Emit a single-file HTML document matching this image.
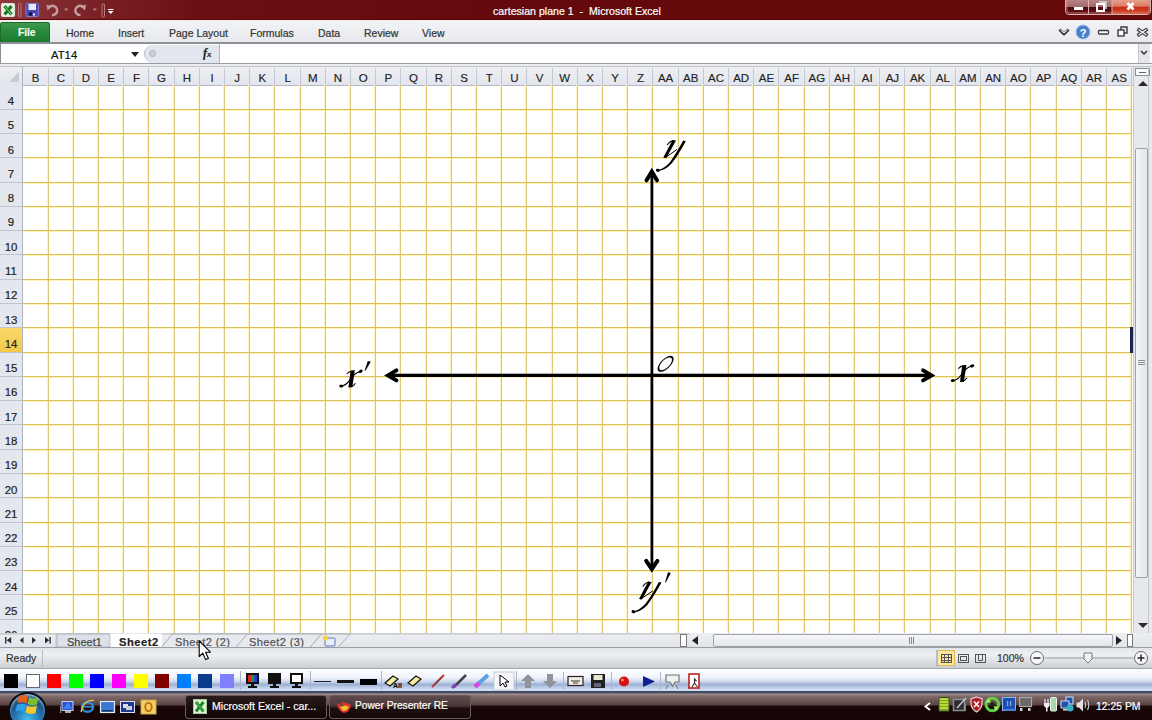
<!DOCTYPE html><html><head><meta charset="utf-8"><style>
*{margin:0;padding:0;box-sizing:border-box}
html,body{width:1152px;height:720px;overflow:hidden;background:#fff;font-family:"Liberation Sans",sans-serif}
.a{position:absolute}
.t{position:absolute;white-space:nowrap;line-height:1;-webkit-text-stroke:0.2px currentColor}
</style></head><body>
<div class="a" style="left:0;top:0;width:1152px;height:21px;background:linear-gradient(90deg,#8e3a3e 0px,#7a2226 90px,#6c0f12 200px,#650a0c 500px,#640808 1152px)"></div>
<div class="a" style="left:0;top:19px;width:1152px;height:2px;background:#5a0506"></div>
<div class="t" style="left:493px;top:6px;font-size:10.6px;color:#fff">cartesian plane 1&nbsp; -&nbsp; Microsoft Excel</div>
<svg class="a" style="left:0;top:2px" width="42" height="17"><rect x="1.5" y="1.5" width="13" height="13" rx="1.5" fill="#eef6e8" stroke="#d8e4d0" stroke-width="1.2"/><path d="M4.5 4 L11.5 12.5 M11.5 4 L4.5 12.5" stroke="#1a7a2a" stroke-width="3.2"/><path d="M5 4.5 L11 12" stroke="#8ad870" stroke-width="1"/><rect x="18.5" y="1.5" width="2.5" height="13" rx="1" fill="none" stroke="#c07878" stroke-width="1"/><rect x="26" y="1.5" width="12.5" height="13" rx="1" fill="#4a46b0"/><rect x="26" y="1.5" width="12.5" height="13" rx="1" fill="none" stroke="#8a86e0" stroke-width="0.8"/><rect x="28.5" y="2" width="7.5" height="6" fill="#e4e8f8"/><rect x="29" y="10.5" width="3" height="3" fill="#101030"/><rect x="33" y="11.5" width="2" height="2" fill="#f0f0f0"/></svg>
<svg class="a" style="left:40px;top:0px" width="80" height="20"><g fill="none" stroke="#c49ea0" stroke-width="2.4"><path d="M9.5 7 A4.6 4.6 0 1 1 12 15"/><path d="M43 7 A4.6 4.6 0 1 0 40.5 15"/></g><g fill="#c49ea0"><path d="M6.5 4.5 L12 6.5 L7.5 10.5z"/><path d="M46 4.5 L40.5 6.5 L45 10.5z"/></g><g fill="#b08486"><path d="M24 8.5 h4.5 l-2.25 2.5z"/><path d="M52.5 8.5 h4.5 l-2.25 2.5z"/></g><rect x="62" y="4" width="2.5" height="13" rx="1" fill="none" stroke="#b97a7a" stroke-width="1"/><g fill="#fff"><rect x="68" y="9" width="5.5" height="1"/><path d="M68 11 h5.5 l-2.75 3z"/></g></svg>
<svg class="a" style="left:1064px;top:0" width="88" height="17"><defs><linearGradient id="wbg" x1="0" y1="0" x2="0" y2="1"><stop offset="0" stop-color="#b88486"/><stop offset="0.45" stop-color="#a46a6c"/><stop offset="0.5" stop-color="#4e0a0c"/><stop offset="1" stop-color="#6a1416"/></linearGradient><linearGradient id="wbc" x1="0" y1="0" x2="0" y2="1"><stop offset="0" stop-color="#e8a088"/><stop offset="0.45" stop-color="#dc7a62"/><stop offset="0.5" stop-color="#c42a12"/><stop offset="1" stop-color="#d8502a"/></linearGradient></defs><path d="M1.5 0 V11 Q1.5 14.5 5 14.5 H83 Q86.5 14.5 86.5 11 V0" fill="url(#wbg)" stroke="#e0b0b0" stroke-width="1"/><path d="M48 0 V14 H83 Q86 14 86 11 V0z" fill="url(#wbc)"/><path d="M3 0 V10.5 Q3 13 5.5 13 H82.5 Q85 13 85 10.5 V0" fill="none" stroke="#c88a8a" stroke-width="0.8"/><rect x="24" y="0" width="1" height="14" fill="#e0b0b0"/><rect x="47.5" y="0" width="1" height="14" fill="#e0b0b0"/><rect x="10" y="7" width="9" height="3" fill="#fff"/><rect x="33" y="4" width="7" height="7" fill="none" stroke="#fff" stroke-width="2"/><path d="M35 2 H42 V9" fill="none" stroke="#ddd" stroke-width="1.5"/><path d="M63.5 3 L69.5 9.5 M69.5 3 L63.5 9.5" stroke="#fff" stroke-width="2.6"/></svg>
<div class="a" style="left:0;top:21px;width:1152px;height:22px;background:linear-gradient(#f2f3f6,#e6e8ec)"></div>
<div class="a" style="left:0;top:20px;width:1152px;height:1px;background:#f4ece6"></div>
<div class="a" style="left:0;top:22px;width:50px;height:21px;background:linear-gradient(#3e9a4a,#26883a 50%,#1c7a30);border-radius:2px 2px 0 0;border:1px solid #1a6a28"></div>
<div class="t" style="left:18px;top:28px;font-size:10.4px;font-weight:bold;letter-spacing:-0.1px;color:#eef8ea">File</div>
<div class="t" style="left:66px;top:28px;font-size:10.5px;color:#333">Home</div>
<div class="t" style="left:118px;top:28px;font-size:10.5px;color:#333">Insert</div>
<div class="t" style="left:169px;top:28px;font-size:10.5px;color:#333">Page Layout</div>
<div class="t" style="left:250px;top:28px;font-size:10.5px;color:#333">Formulas</div>
<div class="t" style="left:318px;top:28px;font-size:10.5px;color:#333">Data</div>
<div class="t" style="left:364px;top:28px;font-size:10.5px;color:#333">Review</div>
<div class="t" style="left:422px;top:28px;font-size:10.5px;color:#333">View</div>
<svg class="a" style="left:1056px;top:22px" width="96" height="20"><path d="M3.5 7.5 L8 12 L12.5 7.5" fill="none" stroke="#3a3a3a" stroke-width="3" stroke-linejoin="round"/><path d="M4.5 7.8 L8 11 L11.5 7.8" fill="none" stroke="#fff" stroke-width="1"/><circle cx="27" cy="10" r="7" fill="#4a80c8" stroke="#9cc0ea" stroke-width="1"/><text x="27" y="14.5" font-family="Liberation Sans" font-weight="bold" font-size="11" fill="#fff" text-anchor="middle">?</text><rect x="42.5" y="8.5" width="10" height="3.5" rx="1" fill="#fff" stroke="#3a3a3a" stroke-width="1.3"/><rect x="62" y="8" width="6" height="6" fill="#fff" stroke="#3a3a3a" stroke-width="1.4"/><path d="M65 8 V5 H71 V11 H68" fill="none" stroke="#3a3a3a" stroke-width="1.4"/><path d="M81.5 7 L91.5 13.5 M91.5 7 L81.5 13.5" stroke="#3a3a3a" stroke-width="3.4"/><path d="M82.5 7.6 L90.5 12.9 M90.5 7.6 L82.5 12.9" stroke="#fff" stroke-width="1.2"/></svg>
<div class="a" style="left:0;top:42px;width:1152px;height:2px;background:#8e9096"></div>
<div class="a" style="left:0;top:44px;width:1152px;height:20px;background:#fff"></div>
<div class="t" style="left:51px;top:50px;font-size:11.3px;color:#111">AT14</div>
<div class="a" style="left:0;top:44px;width:1px;height:24px;background:#8a8e96"></div>
<svg class="a" style="left:130px;top:50px" width="10" height="8"><path d="M1 2 h8 l-4 5z" fill="#222"/></svg>
<div class="a" style="left:144px;top:45px;width:76px;height:18px;background:#e2e6ee;border-radius:9px 0 0 9px;border-left:1px solid #b8bcc4"></div>
<div class="a" style="left:149px;top:50px;width:7px;height:7px;border-radius:50%;background:radial-gradient(#d8dce4,#a8acb4)"></div>
<div class="t" style="left:203px;top:47px;font-size:12px;font-style:italic;font-weight:bold;font-family:'Liberation Serif',serif;color:#222">f<span style="font-size:9px">x</span></div>
<div class="a" style="left:219px;top:44px;width:1px;height:19px;background:#b4b8c0"></div>
<div class="a" style="left:1138px;top:44px;width:12px;height:19px;background:#e4e6ea;border-left:1px solid #c4c6cc"></div>
<svg class="a" style="left:1139px;top:48px" width="10" height="10"><path d="M2 3 l3 3 l3 -3" fill="none" stroke="#333" stroke-width="1.5"/></svg>
<div class="a" style="left:0;top:63px;width:1152px;height:1px;background:#9a9ca2"></div>
<div class="a" style="left:0;top:64px;width:1152px;height:4px;background:#eceef2"></div>
<div class="a" style="left:0;top:66px;width:1152px;height:1px;background:#c0c2c8"></div>
<div class="a" style="left:0;top:67px;width:1133px;height:18px;background:linear-gradient(#eef0f4,#e2e5ec)"></div>
<div class="a" style="left:0;top:85px;width:1133px;height:1px;background:#b4b8c0"></div>
<svg class="a" style="left:8px;top:71px" width="12" height="12"><path d="M11 1 V11 H1z" fill="#c8ccd2"/></svg>
<div class="a" style="left:0;top:85px;width:23px;height:548px;background:#e4e7ee"></div>
<div class="a" style="left:22px;top:67px;width:1px;height:566px;background:#b0b4bc"></div>
<div class="t" style="left:23.0px;top:72.5px;width:25.2px;text-align:center;font-size:11.5px;color:#222;-webkit-text-stroke:0.15px #222">B</div>
<div class="a" style="left:48px;top:68px;width:1px;height:17px;background:#c4c8d0"></div>
<div class="t" style="left:48.2px;top:72.5px;width:25.2px;text-align:center;font-size:11.5px;color:#222;-webkit-text-stroke:0.15px #222">C</div>
<div class="a" style="left:73px;top:68px;width:1px;height:17px;background:#c4c8d0"></div>
<div class="t" style="left:73.4px;top:72.5px;width:25.2px;text-align:center;font-size:11.5px;color:#222;-webkit-text-stroke:0.15px #222">D</div>
<div class="a" style="left:98px;top:68px;width:1px;height:17px;background:#c4c8d0"></div>
<div class="t" style="left:98.6px;top:72.5px;width:25.2px;text-align:center;font-size:11.5px;color:#222;-webkit-text-stroke:0.15px #222">E</div>
<div class="a" style="left:123px;top:68px;width:1px;height:17px;background:#c4c8d0"></div>
<div class="t" style="left:123.8px;top:72.5px;width:25.2px;text-align:center;font-size:11.5px;color:#222;-webkit-text-stroke:0.15px #222">F</div>
<div class="a" style="left:148px;top:68px;width:1px;height:17px;background:#c4c8d0"></div>
<div class="t" style="left:149.0px;top:72.5px;width:25.2px;text-align:center;font-size:11.5px;color:#222;-webkit-text-stroke:0.15px #222">G</div>
<div class="a" style="left:174px;top:68px;width:1px;height:17px;background:#c4c8d0"></div>
<div class="t" style="left:174.2px;top:72.5px;width:25.2px;text-align:center;font-size:11.5px;color:#222;-webkit-text-stroke:0.15px #222">H</div>
<div class="a" style="left:199px;top:68px;width:1px;height:17px;background:#c4c8d0"></div>
<div class="t" style="left:199.4px;top:72.5px;width:25.2px;text-align:center;font-size:11.5px;color:#222;-webkit-text-stroke:0.15px #222">I</div>
<div class="a" style="left:224px;top:68px;width:1px;height:17px;background:#c4c8d0"></div>
<div class="t" style="left:224.6px;top:72.5px;width:25.2px;text-align:center;font-size:11.5px;color:#222;-webkit-text-stroke:0.15px #222">J</div>
<div class="a" style="left:249px;top:68px;width:1px;height:17px;background:#c4c8d0"></div>
<div class="t" style="left:249.8px;top:72.5px;width:25.2px;text-align:center;font-size:11.5px;color:#222;-webkit-text-stroke:0.15px #222">K</div>
<div class="a" style="left:274px;top:68px;width:1px;height:17px;background:#c4c8d0"></div>
<div class="t" style="left:275.0px;top:72.5px;width:25.2px;text-align:center;font-size:11.5px;color:#222;-webkit-text-stroke:0.15px #222">L</div>
<div class="a" style="left:300px;top:68px;width:1px;height:17px;background:#c4c8d0"></div>
<div class="t" style="left:300.2px;top:72.5px;width:25.2px;text-align:center;font-size:11.5px;color:#222;-webkit-text-stroke:0.15px #222">M</div>
<div class="a" style="left:325px;top:68px;width:1px;height:17px;background:#c4c8d0"></div>
<div class="t" style="left:325.4px;top:72.5px;width:25.2px;text-align:center;font-size:11.5px;color:#222;-webkit-text-stroke:0.15px #222">N</div>
<div class="a" style="left:350px;top:68px;width:1px;height:17px;background:#c4c8d0"></div>
<div class="t" style="left:350.6px;top:72.5px;width:25.2px;text-align:center;font-size:11.5px;color:#222;-webkit-text-stroke:0.15px #222">O</div>
<div class="a" style="left:375px;top:68px;width:1px;height:17px;background:#c4c8d0"></div>
<div class="t" style="left:375.8px;top:72.5px;width:25.2px;text-align:center;font-size:11.5px;color:#222;-webkit-text-stroke:0.15px #222">P</div>
<div class="a" style="left:400px;top:68px;width:1px;height:17px;background:#c4c8d0"></div>
<div class="t" style="left:401.0px;top:72.5px;width:25.2px;text-align:center;font-size:11.5px;color:#222;-webkit-text-stroke:0.15px #222">Q</div>
<div class="a" style="left:426px;top:68px;width:1px;height:17px;background:#c4c8d0"></div>
<div class="t" style="left:426.2px;top:72.5px;width:25.2px;text-align:center;font-size:11.5px;color:#222;-webkit-text-stroke:0.15px #222">R</div>
<div class="a" style="left:451px;top:68px;width:1px;height:17px;background:#c4c8d0"></div>
<div class="t" style="left:451.4px;top:72.5px;width:25.2px;text-align:center;font-size:11.5px;color:#222;-webkit-text-stroke:0.15px #222">S</div>
<div class="a" style="left:476px;top:68px;width:1px;height:17px;background:#c4c8d0"></div>
<div class="t" style="left:476.6px;top:72.5px;width:25.2px;text-align:center;font-size:11.5px;color:#222;-webkit-text-stroke:0.15px #222">T</div>
<div class="a" style="left:501px;top:68px;width:1px;height:17px;background:#c4c8d0"></div>
<div class="t" style="left:501.8px;top:72.5px;width:25.2px;text-align:center;font-size:11.5px;color:#222;-webkit-text-stroke:0.15px #222">U</div>
<div class="a" style="left:526px;top:68px;width:1px;height:17px;background:#c4c8d0"></div>
<div class="t" style="left:527.0px;top:72.5px;width:25.2px;text-align:center;font-size:11.5px;color:#222;-webkit-text-stroke:0.15px #222">V</div>
<div class="a" style="left:552px;top:68px;width:1px;height:17px;background:#c4c8d0"></div>
<div class="t" style="left:552.2px;top:72.5px;width:25.2px;text-align:center;font-size:11.5px;color:#222;-webkit-text-stroke:0.15px #222">W</div>
<div class="a" style="left:577px;top:68px;width:1px;height:17px;background:#c4c8d0"></div>
<div class="t" style="left:577.4px;top:72.5px;width:25.2px;text-align:center;font-size:11.5px;color:#222;-webkit-text-stroke:0.15px #222">X</div>
<div class="a" style="left:602px;top:68px;width:1px;height:17px;background:#c4c8d0"></div>
<div class="t" style="left:602.6px;top:72.5px;width:25.2px;text-align:center;font-size:11.5px;color:#222;-webkit-text-stroke:0.15px #222">Y</div>
<div class="a" style="left:627px;top:68px;width:1px;height:17px;background:#c4c8d0"></div>
<div class="t" style="left:627.8px;top:72.5px;width:25.2px;text-align:center;font-size:11.5px;color:#222;-webkit-text-stroke:0.15px #222">Z</div>
<div class="a" style="left:652px;top:68px;width:1px;height:17px;background:#c4c8d0"></div>
<div class="t" style="left:653.0px;top:72.5px;width:25.2px;text-align:center;font-size:11.5px;color:#222;-webkit-text-stroke:0.15px #222">AA</div>
<div class="a" style="left:678px;top:68px;width:1px;height:17px;background:#c4c8d0"></div>
<div class="t" style="left:678.2px;top:72.5px;width:25.2px;text-align:center;font-size:11.5px;color:#222;-webkit-text-stroke:0.15px #222">AB</div>
<div class="a" style="left:703px;top:68px;width:1px;height:17px;background:#c4c8d0"></div>
<div class="t" style="left:703.4px;top:72.5px;width:25.2px;text-align:center;font-size:11.5px;color:#222;-webkit-text-stroke:0.15px #222">AC</div>
<div class="a" style="left:728px;top:68px;width:1px;height:17px;background:#c4c8d0"></div>
<div class="t" style="left:728.6px;top:72.5px;width:25.2px;text-align:center;font-size:11.5px;color:#222;-webkit-text-stroke:0.15px #222">AD</div>
<div class="a" style="left:753px;top:68px;width:1px;height:17px;background:#c4c8d0"></div>
<div class="t" style="left:753.8px;top:72.5px;width:25.2px;text-align:center;font-size:11.5px;color:#222;-webkit-text-stroke:0.15px #222">AE</div>
<div class="a" style="left:778px;top:68px;width:1px;height:17px;background:#c4c8d0"></div>
<div class="t" style="left:779.0px;top:72.5px;width:25.2px;text-align:center;font-size:11.5px;color:#222;-webkit-text-stroke:0.15px #222">AF</div>
<div class="a" style="left:804px;top:68px;width:1px;height:17px;background:#c4c8d0"></div>
<div class="t" style="left:804.2px;top:72.5px;width:25.2px;text-align:center;font-size:11.5px;color:#222;-webkit-text-stroke:0.15px #222">AG</div>
<div class="a" style="left:829px;top:68px;width:1px;height:17px;background:#c4c8d0"></div>
<div class="t" style="left:829.4px;top:72.5px;width:25.2px;text-align:center;font-size:11.5px;color:#222;-webkit-text-stroke:0.15px #222">AH</div>
<div class="a" style="left:854px;top:68px;width:1px;height:17px;background:#c4c8d0"></div>
<div class="t" style="left:854.6px;top:72.5px;width:25.2px;text-align:center;font-size:11.5px;color:#222;-webkit-text-stroke:0.15px #222">AI</div>
<div class="a" style="left:879px;top:68px;width:1px;height:17px;background:#c4c8d0"></div>
<div class="t" style="left:879.8px;top:72.5px;width:25.2px;text-align:center;font-size:11.5px;color:#222;-webkit-text-stroke:0.15px #222">AJ</div>
<div class="a" style="left:904px;top:68px;width:1px;height:17px;background:#c4c8d0"></div>
<div class="t" style="left:905.0px;top:72.5px;width:25.2px;text-align:center;font-size:11.5px;color:#222;-webkit-text-stroke:0.15px #222">AK</div>
<div class="a" style="left:930px;top:68px;width:1px;height:17px;background:#c4c8d0"></div>
<div class="t" style="left:930.2px;top:72.5px;width:25.2px;text-align:center;font-size:11.5px;color:#222;-webkit-text-stroke:0.15px #222">AL</div>
<div class="a" style="left:955px;top:68px;width:1px;height:17px;background:#c4c8d0"></div>
<div class="t" style="left:955.4px;top:72.5px;width:25.2px;text-align:center;font-size:11.5px;color:#222;-webkit-text-stroke:0.15px #222">AM</div>
<div class="a" style="left:980px;top:68px;width:1px;height:17px;background:#c4c8d0"></div>
<div class="t" style="left:980.6px;top:72.5px;width:25.2px;text-align:center;font-size:11.5px;color:#222;-webkit-text-stroke:0.15px #222">AN</div>
<div class="a" style="left:1005px;top:68px;width:1px;height:17px;background:#c4c8d0"></div>
<div class="t" style="left:1005.8px;top:72.5px;width:25.2px;text-align:center;font-size:11.5px;color:#222;-webkit-text-stroke:0.15px #222">AO</div>
<div class="a" style="left:1030px;top:68px;width:1px;height:17px;background:#c4c8d0"></div>
<div class="t" style="left:1031.0px;top:72.5px;width:25.2px;text-align:center;font-size:11.5px;color:#222;-webkit-text-stroke:0.15px #222">AP</div>
<div class="a" style="left:1056px;top:68px;width:1px;height:17px;background:#c4c8d0"></div>
<div class="t" style="left:1056.2px;top:72.5px;width:25.2px;text-align:center;font-size:11.5px;color:#222;-webkit-text-stroke:0.15px #222">AQ</div>
<div class="a" style="left:1081px;top:68px;width:1px;height:17px;background:#c4c8d0"></div>
<div class="t" style="left:1081.4px;top:72.5px;width:25.2px;text-align:center;font-size:11.5px;color:#222;-webkit-text-stroke:0.15px #222">AR</div>
<div class="a" style="left:1106px;top:68px;width:1px;height:17px;background:#c4c8d0"></div>
<div class="t" style="left:1106.6px;top:72.5px;width:25.2px;text-align:center;font-size:11.5px;color:#222;-webkit-text-stroke:0.15px #222">AS</div>
<div class="a" style="left:1131px;top:68px;width:1px;height:17px;background:#c4c8d0"></div>
<div class="t" style="left:0;top:96.0px;width:22px;text-align:center;font-size:11.4px;color:#222;-webkit-text-stroke:0.2px #222">4</div>
<div class="a" style="left:0;top:109px;width:22px;height:1px;background:#c0c4cc"></div>
<div class="t" style="left:0;top:120.3px;width:22px;text-align:center;font-size:11.4px;color:#222;-webkit-text-stroke:0.2px #222">5</div>
<div class="a" style="left:0;top:133px;width:22px;height:1px;background:#c0c4cc"></div>
<div class="t" style="left:0;top:144.6px;width:22px;text-align:center;font-size:11.4px;color:#222;-webkit-text-stroke:0.2px #222">6</div>
<div class="a" style="left:0;top:157px;width:22px;height:1px;background:#c0c4cc"></div>
<div class="t" style="left:0;top:168.8px;width:22px;text-align:center;font-size:11.4px;color:#222;-webkit-text-stroke:0.2px #222">7</div>
<div class="a" style="left:0;top:182px;width:22px;height:1px;background:#c0c4cc"></div>
<div class="t" style="left:0;top:193.1px;width:22px;text-align:center;font-size:11.4px;color:#222;-webkit-text-stroke:0.2px #222">8</div>
<div class="a" style="left:0;top:206px;width:22px;height:1px;background:#c0c4cc"></div>
<div class="t" style="left:0;top:217.4px;width:22px;text-align:center;font-size:11.4px;color:#222;-webkit-text-stroke:0.2px #222">9</div>
<div class="a" style="left:0;top:230px;width:22px;height:1px;background:#c0c4cc"></div>
<div class="t" style="left:0;top:241.7px;width:22px;text-align:center;font-size:11.4px;color:#222;-webkit-text-stroke:0.2px #222">10</div>
<div class="a" style="left:0;top:254px;width:22px;height:1px;background:#c0c4cc"></div>
<div class="t" style="left:0;top:266.0px;width:22px;text-align:center;font-size:11.4px;color:#222;-webkit-text-stroke:0.2px #222">11</div>
<div class="a" style="left:0;top:279px;width:22px;height:1px;background:#c0c4cc"></div>
<div class="t" style="left:0;top:290.2px;width:22px;text-align:center;font-size:11.4px;color:#222;-webkit-text-stroke:0.2px #222">12</div>
<div class="a" style="left:0;top:303px;width:22px;height:1px;background:#c0c4cc"></div>
<div class="t" style="left:0;top:314.5px;width:22px;text-align:center;font-size:11.4px;color:#222;-webkit-text-stroke:0.2px #222">13</div>
<div class="a" style="left:0;top:327px;width:22px;height:1px;background:#c0c4cc"></div>
<div class="a" style="left:0;top:327.8px;width:22px;height:24.3px;background:linear-gradient(#f8d86a,#f4c84a)"></div>
<div class="t" style="left:0;top:338.8px;width:22px;text-align:center;font-size:11.4px;color:#222;-webkit-text-stroke:0.2px #222">14</div>
<div class="a" style="left:0;top:352px;width:22px;height:1px;background:#c0c4cc"></div>
<div class="t" style="left:0;top:363.1px;width:22px;text-align:center;font-size:11.4px;color:#222;-webkit-text-stroke:0.2px #222">15</div>
<div class="a" style="left:0;top:376px;width:22px;height:1px;background:#c0c4cc"></div>
<div class="t" style="left:0;top:387.4px;width:22px;text-align:center;font-size:11.4px;color:#222;-webkit-text-stroke:0.2px #222">16</div>
<div class="a" style="left:0;top:400px;width:22px;height:1px;background:#c0c4cc"></div>
<div class="t" style="left:0;top:411.6px;width:22px;text-align:center;font-size:11.4px;color:#222;-webkit-text-stroke:0.2px #222">17</div>
<div class="a" style="left:0;top:424px;width:22px;height:1px;background:#c0c4cc"></div>
<div class="t" style="left:0;top:435.9px;width:22px;text-align:center;font-size:11.4px;color:#222;-webkit-text-stroke:0.2px #222">18</div>
<div class="a" style="left:0;top:449px;width:22px;height:1px;background:#c0c4cc"></div>
<div class="t" style="left:0;top:460.2px;width:22px;text-align:center;font-size:11.4px;color:#222;-webkit-text-stroke:0.2px #222">19</div>
<div class="a" style="left:0;top:473px;width:22px;height:1px;background:#c0c4cc"></div>
<div class="t" style="left:0;top:484.5px;width:22px;text-align:center;font-size:11.4px;color:#222;-webkit-text-stroke:0.2px #222">20</div>
<div class="a" style="left:0;top:497px;width:22px;height:1px;background:#c0c4cc"></div>
<div class="t" style="left:0;top:508.8px;width:22px;text-align:center;font-size:11.4px;color:#222;-webkit-text-stroke:0.2px #222">21</div>
<div class="a" style="left:0;top:522px;width:22px;height:1px;background:#c0c4cc"></div>
<div class="t" style="left:0;top:533.0px;width:22px;text-align:center;font-size:11.4px;color:#222;-webkit-text-stroke:0.2px #222">22</div>
<div class="a" style="left:0;top:546px;width:22px;height:1px;background:#c0c4cc"></div>
<div class="t" style="left:0;top:557.3px;width:22px;text-align:center;font-size:11.4px;color:#222;-webkit-text-stroke:0.2px #222">23</div>
<div class="a" style="left:0;top:570px;width:22px;height:1px;background:#c0c4cc"></div>
<div class="t" style="left:0;top:581.6px;width:22px;text-align:center;font-size:11.4px;color:#222;-webkit-text-stroke:0.2px #222">24</div>
<div class="a" style="left:0;top:594px;width:22px;height:1px;background:#c0c4cc"></div>
<div class="t" style="left:0;top:605.9px;width:22px;text-align:center;font-size:11.4px;color:#222;-webkit-text-stroke:0.2px #222">25</div>
<div class="a" style="left:0;top:619px;width:22px;height:1px;background:#c0c4cc"></div>
<div class="t" style="left:0;top:630.2px;width:22px;text-align:center;font-size:11.4px;color:#222;-webkit-text-stroke:0.2px #222">26</div>
<div class="a" style="left:0;top:643px;width:22px;height:1px;background:#c0c4cc"></div>
<svg class="a" style="left:0;top:0" width="1152" height="720"><g stroke="#fff3b4" stroke-width="1"><line x1="47.5" y1="85" x2="47.5" y2="633"/><line x1="72.5" y1="85" x2="72.5" y2="633"/><line x1="97.5" y1="85" x2="97.5" y2="633"/><line x1="122.5" y1="85" x2="122.5" y2="633"/><line x1="147.5" y1="85" x2="147.5" y2="633"/><line x1="173.5" y1="85" x2="173.5" y2="633"/><line x1="198.5" y1="85" x2="198.5" y2="633"/><line x1="223.5" y1="85" x2="223.5" y2="633"/><line x1="248.5" y1="85" x2="248.5" y2="633"/><line x1="273.5" y1="85" x2="273.5" y2="633"/><line x1="299.5" y1="85" x2="299.5" y2="633"/><line x1="324.5" y1="85" x2="324.5" y2="633"/><line x1="349.5" y1="85" x2="349.5" y2="633"/><line x1="374.5" y1="85" x2="374.5" y2="633"/><line x1="399.5" y1="85" x2="399.5" y2="633"/><line x1="425.5" y1="85" x2="425.5" y2="633"/><line x1="450.5" y1="85" x2="450.5" y2="633"/><line x1="475.5" y1="85" x2="475.5" y2="633"/><line x1="500.5" y1="85" x2="500.5" y2="633"/><line x1="525.5" y1="85" x2="525.5" y2="633"/><line x1="551.5" y1="85" x2="551.5" y2="633"/><line x1="576.5" y1="85" x2="576.5" y2="633"/><line x1="601.5" y1="85" x2="601.5" y2="633"/><line x1="626.5" y1="85" x2="626.5" y2="633"/><line x1="651.5" y1="85" x2="651.5" y2="633"/><line x1="677.5" y1="85" x2="677.5" y2="633"/><line x1="702.5" y1="85" x2="702.5" y2="633"/><line x1="727.5" y1="85" x2="727.5" y2="633"/><line x1="752.5" y1="85" x2="752.5" y2="633"/><line x1="777.5" y1="85" x2="777.5" y2="633"/><line x1="803.5" y1="85" x2="803.5" y2="633"/><line x1="828.5" y1="85" x2="828.5" y2="633"/><line x1="853.5" y1="85" x2="853.5" y2="633"/><line x1="878.5" y1="85" x2="878.5" y2="633"/><line x1="903.5" y1="85" x2="903.5" y2="633"/><line x1="929.5" y1="85" x2="929.5" y2="633"/><line x1="954.5" y1="85" x2="954.5" y2="633"/><line x1="979.5" y1="85" x2="979.5" y2="633"/><line x1="1004.5" y1="85" x2="1004.5" y2="633"/><line x1="1029.5" y1="85" x2="1029.5" y2="633"/><line x1="1055.5" y1="85" x2="1055.5" y2="633"/><line x1="1080.5" y1="85" x2="1080.5" y2="633"/><line x1="1105.5" y1="85" x2="1105.5" y2="633"/><line x1="1130.5" y1="85" x2="1130.5" y2="633"/><line x1="23" y1="110.5" x2="1132" y2="110.5"/><line x1="23" y1="134.5" x2="1132" y2="134.5"/><line x1="23" y1="158.5" x2="1132" y2="158.5"/><line x1="23" y1="183.5" x2="1132" y2="183.5"/><line x1="23" y1="207.5" x2="1132" y2="207.5"/><line x1="23" y1="231.5" x2="1132" y2="231.5"/><line x1="23" y1="255.5" x2="1132" y2="255.5"/><line x1="23" y1="280.5" x2="1132" y2="280.5"/><line x1="23" y1="304.5" x2="1132" y2="304.5"/><line x1="23" y1="328.5" x2="1132" y2="328.5"/><line x1="23" y1="353.5" x2="1132" y2="353.5"/><line x1="23" y1="377.5" x2="1132" y2="377.5"/><line x1="23" y1="401.5" x2="1132" y2="401.5"/><line x1="23" y1="425.5" x2="1132" y2="425.5"/><line x1="23" y1="450.5" x2="1132" y2="450.5"/><line x1="23" y1="474.5" x2="1132" y2="474.5"/><line x1="23" y1="498.5" x2="1132" y2="498.5"/><line x1="23" y1="523.5" x2="1132" y2="523.5"/><line x1="23" y1="547.5" x2="1132" y2="547.5"/><line x1="23" y1="571.5" x2="1132" y2="571.5"/><line x1="23" y1="595.5" x2="1132" y2="595.5"/><line x1="23" y1="620.5" x2="1132" y2="620.5"/></g><g stroke="#e0c670" stroke-width="1"><line x1="48.5" y1="85" x2="48.5" y2="633"/><line x1="73.5" y1="85" x2="73.5" y2="633"/><line x1="98.5" y1="85" x2="98.5" y2="633"/><line x1="123.5" y1="85" x2="123.5" y2="633"/><line x1="148.5" y1="85" x2="148.5" y2="633"/><line x1="174.5" y1="85" x2="174.5" y2="633"/><line x1="199.5" y1="85" x2="199.5" y2="633"/><line x1="224.5" y1="85" x2="224.5" y2="633"/><line x1="249.5" y1="85" x2="249.5" y2="633"/><line x1="274.5" y1="85" x2="274.5" y2="633"/><line x1="300.5" y1="85" x2="300.5" y2="633"/><line x1="325.5" y1="85" x2="325.5" y2="633"/><line x1="350.5" y1="85" x2="350.5" y2="633"/><line x1="375.5" y1="85" x2="375.5" y2="633"/><line x1="400.5" y1="85" x2="400.5" y2="633"/><line x1="426.5" y1="85" x2="426.5" y2="633"/><line x1="451.5" y1="85" x2="451.5" y2="633"/><line x1="476.5" y1="85" x2="476.5" y2="633"/><line x1="501.5" y1="85" x2="501.5" y2="633"/><line x1="526.5" y1="85" x2="526.5" y2="633"/><line x1="552.5" y1="85" x2="552.5" y2="633"/><line x1="577.5" y1="85" x2="577.5" y2="633"/><line x1="602.5" y1="85" x2="602.5" y2="633"/><line x1="627.5" y1="85" x2="627.5" y2="633"/><line x1="652.5" y1="85" x2="652.5" y2="633"/><line x1="678.5" y1="85" x2="678.5" y2="633"/><line x1="703.5" y1="85" x2="703.5" y2="633"/><line x1="728.5" y1="85" x2="728.5" y2="633"/><line x1="753.5" y1="85" x2="753.5" y2="633"/><line x1="778.5" y1="85" x2="778.5" y2="633"/><line x1="804.5" y1="85" x2="804.5" y2="633"/><line x1="829.5" y1="85" x2="829.5" y2="633"/><line x1="854.5" y1="85" x2="854.5" y2="633"/><line x1="879.5" y1="85" x2="879.5" y2="633"/><line x1="904.5" y1="85" x2="904.5" y2="633"/><line x1="930.5" y1="85" x2="930.5" y2="633"/><line x1="955.5" y1="85" x2="955.5" y2="633"/><line x1="980.5" y1="85" x2="980.5" y2="633"/><line x1="1005.5" y1="85" x2="1005.5" y2="633"/><line x1="1030.5" y1="85" x2="1030.5" y2="633"/><line x1="1056.5" y1="85" x2="1056.5" y2="633"/><line x1="1081.5" y1="85" x2="1081.5" y2="633"/><line x1="1106.5" y1="85" x2="1106.5" y2="633"/><line x1="1131.5" y1="85" x2="1131.5" y2="633"/></g><g stroke="#dcbe5c" stroke-width="1"><line x1="23" y1="109.5" x2="1132" y2="109.5"/><line x1="23" y1="133.5" x2="1132" y2="133.5"/><line x1="23" y1="157.5" x2="1132" y2="157.5"/><line x1="23" y1="182.5" x2="1132" y2="182.5"/><line x1="23" y1="206.5" x2="1132" y2="206.5"/><line x1="23" y1="230.5" x2="1132" y2="230.5"/><line x1="23" y1="254.5" x2="1132" y2="254.5"/><line x1="23" y1="279.5" x2="1132" y2="279.5"/><line x1="23" y1="303.5" x2="1132" y2="303.5"/><line x1="23" y1="327.5" x2="1132" y2="327.5"/><line x1="23" y1="352.5" x2="1132" y2="352.5"/><line x1="23" y1="376.5" x2="1132" y2="376.5"/><line x1="23" y1="400.5" x2="1132" y2="400.5"/><line x1="23" y1="424.5" x2="1132" y2="424.5"/><line x1="23" y1="449.5" x2="1132" y2="449.5"/><line x1="23" y1="473.5" x2="1132" y2="473.5"/><line x1="23" y1="497.5" x2="1132" y2="497.5"/><line x1="23" y1="522.5" x2="1132" y2="522.5"/><line x1="23" y1="546.5" x2="1132" y2="546.5"/><line x1="23" y1="570.5" x2="1132" y2="570.5"/><line x1="23" y1="594.5" x2="1132" y2="594.5"/><line x1="23" y1="619.5" x2="1132" y2="619.5"/></g><g stroke="#000" fill="none"><rect x="650.5" y="172" width="2.8" height="397" fill="#000" stroke="none"/><rect x="388" y="373.7" width="544" height="3.3" fill="#000" stroke="none"/><g stroke-width="4" stroke-linecap="round" stroke-linejoin="miter" stroke-miterlimit="10"><path d="M646.5 180.3 L651.8 171.7 L657 180.3"/><path d="M646.2 560.8 L651.8 569.1 L657.4 560.8"/><path d="M396.4 370.4 L388 375.4 L396.4 380.4"/><path d="M923.1 370.4 L931.5 375.4 L923.1 380.4"/></g></g><g><path d="M962.2 365.4 L966.4 364.7 L963.9 381.9 L960 382.1 Z" fill="#000"/><path d="M958.3 368.6 Q960.5 366.2 963.5 365.6 M963 381.4 Q965.5 380.2 967 377.8" stroke="#000" stroke-width="1.1" fill="none"/><path d="M952.5 380.8 Q957.5 380.4 961.5 374.5 Q966.5 367 972.5 365.8" stroke="#000" stroke-width="1.1" fill="none"/><ellipse cx="952.8" cy="380.6" rx="2" ry="1.5" fill="#000"/><ellipse cx="972.2" cy="365.9" rx="2.2" ry="1.5" transform="rotate(-25 972.2 365.9)" fill="#000"/></g><g transform="translate(-611.6 5.4)"><path d="M962.2 365.4 L966.4 364.7 L963.9 381.9 L960 382.1 Z" fill="#000"/><path d="M958.3 368.6 Q960.5 366.2 963.5 365.6 M963 381.4 Q965.5 380.2 967 377.8" stroke="#000" stroke-width="1.1" fill="none"/><path d="M952.5 380.8 Q957.5 380.4 961.5 374.5 Q966.5 367 972.5 365.8" stroke="#000" stroke-width="1.1" fill="none"/><ellipse cx="952.8" cy="380.6" rx="2" ry="1.5" fill="#000"/><ellipse cx="972.2" cy="365.9" rx="2.2" ry="1.5" transform="rotate(-25 972.2 365.9)" fill="#000"/></g><path d="M367.8 361 L370.8 361.8 L365.4 370.8 L364.6 370.4 Z" fill="#000"/><g><path d="M672.4 140.3 L676 140.6 L666.2 158.2 L663.3 157.6 Z" fill="#000"/><path d="M667 145 Q669.5 141.5 673.5 140.4" stroke="#000" stroke-width="1.1" fill="none"/><path d="M665 157.6 Q670 154.5 677 149.5" stroke="#000" stroke-width="1" fill="none"/><path d="M683.2 140.6 L685.8 141.2 Q678.2 155.2 671.6 163.6 Q665 170.6 658.5 170.8 L658.3 169.8 Q664.2 168.8 670 162.2 Q676.2 153.6 683.2 140.6 Z" fill="#000"/><ellipse cx="657.8" cy="170.3" rx="2" ry="1.5" transform="rotate(15 657.8 170.3)" fill="#000"/></g><g transform="translate(-24.3 441.4)"><path d="M672.4 140.3 L676 140.6 L666.2 158.2 L663.3 157.6 Z" fill="#000"/><path d="M667 145 Q669.5 141.5 673.5 140.4" stroke="#000" stroke-width="1.1" fill="none"/><path d="M665 157.6 Q670 154.5 677 149.5" stroke="#000" stroke-width="1" fill="none"/><path d="M683.2 140.6 L685.8 141.2 Q678.2 155.2 671.6 163.6 Q665 170.6 658.5 170.8 L658.3 169.8 Q664.2 168.8 670 162.2 Q676.2 153.6 683.2 140.6 Z" fill="#000"/><ellipse cx="657.8" cy="170.3" rx="2" ry="1.5" transform="rotate(15 657.8 170.3)" fill="#000"/></g><path d="M668 572.2 L670.8 573 L665.8 582.6 L665 582.3 Z" fill="#000"/><path d="M672.81 356.64 L673.20 357.15 L673.46 357.78 L673.59 358.51 L673.58 359.34 L673.43 360.24 L673.15 361.20 L672.74 362.21 L672.21 363.24 L671.56 364.29 L670.81 365.33 L669.98 366.34 L669.06 367.31 L668.09 368.23 L667.08 369.06 L666.04 369.81 L664.99 370.46 L663.96 370.99 L662.95 371.40 L661.99 371.68 L661.09 371.83 L660.26 371.84 L659.53 371.71 L658.90 371.45 L658.39 371.06 L658.00 370.55 L657.74 369.92 L657.61 369.19 L657.62 368.36 L657.77 367.46 L658.05 366.50 L658.46 365.49 L658.99 364.46 L659.64 363.41 L660.39 362.37 L661.22 361.36 L662.14 360.39 L663.11 359.47 L664.12 358.64 L665.16 357.89 L666.21 357.24 L667.24 356.71 L668.25 356.30 L669.21 356.02 L670.11 355.87 L670.94 355.86 L671.67 355.99 L672.30 356.25Z M671.33 358.12 L670.92 357.81 L670.42 357.60 L669.84 357.50 L669.18 357.51 L668.47 357.63 L667.70 357.85 L666.90 358.18 L666.08 358.60 L665.24 359.11 L664.42 359.70 L663.61 360.37 L662.84 361.09 L662.12 361.86 L661.45 362.67 L660.86 363.49 L660.35 364.33 L659.93 365.15 L659.60 365.95 L659.38 366.72 L659.26 367.43 L659.25 368.09 L659.35 368.67 L659.56 369.17 L659.87 369.58 L660.28 369.89 L660.78 370.10 L661.36 370.20 L662.02 370.19 L662.73 370.07 L663.50 369.85 L664.30 369.52 L665.12 369.10 L665.96 368.59 L666.78 368.00 L667.59 367.33 L668.36 366.61 L669.08 365.84 L669.75 365.03 L670.34 364.21 L670.85 363.37 L671.27 362.55 L671.60 361.75 L671.82 360.98 L671.94 360.27 L671.95 359.61 L671.85 359.03 L671.64 358.53Z" fill="#000" fill-rule="evenodd"/></svg>
<div class="a" style="left:1130px;top:327px;width:3px;height:26px;background:#1a2450"></div>
<div class="a" style="left:1133px;top:67px;width:19px;height:566px;background:#e6e8ec;border-left:1px solid #c8ccd2"></div>
<div class="a" style="left:1135px;top:68px;width:15px;height:8px;background:#fafbfc;border:1px solid #8a8e96"></div>
<div class="a" style="left:1139px;top:72px;width:7px;height:1px;background:#666"></div>
<svg class="a" style="left:1136px;top:78px" width="14" height="10"><path d="M2 8 L7 3 L12 8z" fill="#2a2a2a"/></svg>
<div class="a" style="left:1135px;top:148px;width:13px;height:430px;background:linear-gradient(90deg,#f4f5f7,#e2e4e8);border:1px solid #9ea2aa;border-radius:2px"></div>
<div class="a" style="left:1138px;top:360px;width:7px;height:1px;background:#8a8e96;box-shadow:0 2px 0 #8a8e96,0 4px 0 #8a8e96"></div>
<svg class="a" style="left:1136px;top:621px" width="14" height="10"><path d="M2 2 L7 7 L12 2z" fill="#2a2a2a"/></svg>
<div class="a" style="left:1148px;top:67px;width:1px;height:566px;background:#c4c8ce"></div>
<div class="a" style="left:0;top:633px;width:1152px;height:15px;background:linear-gradient(#eceef2,#e0e3e8)"></div>
<svg class="a" style="left:0;top:630px" width="690" height="20"><rect x="0" y="3.4" width="690" height="1" fill="#b4b8c0"/><g fill="#2a2e36"><rect x="5" y="7" width="1.4" height="6.5"/><path d="M11.2 7 L6.6 10.2 L11.2 13.5z"/><path d="M23.5 7 L19.8 10.2 L23.5 13.5z"/><path d="M32 7 L36 10.2 L32 13.5z"/><path d="M45 7 L49.2 10.2 L45 13.5z"/><rect x="49.4" y="7" width="1.4" height="6.5"/></g><rect x="55.5" y="3.5" width="1" height="14" fill="#c0c4cc"/><path d="M57 4 H110 V16 L108 17 H57z" fill="#dde1e8" stroke="#b0b4bc" stroke-width="1"/><path d="M110.5 3.5 H162 V17.5 H110.5z" fill="#ffffff"/><path d="M161.3 17.5 L172.4 4 H248 L237 17.5z" fill="#e6e9ee" stroke="#a8acb4" stroke-width="1"/><path d="M235.6 17.5 L247.3 4 H322 L310.5 17.5z" fill="#e6e9ee" stroke="#a8acb4" stroke-width="1"/><path d="M309.8 17.5 L321.6 4 H350.2 L337.8 17.5z" fill="#e6e9ee" stroke="#a8acb4" stroke-width="1"/><rect x="0" y="17" width="690" height="1" fill="#9a9ea6"/><rect x="110.5" y="16.5" width="51.5" height="1" fill="#ffffff"/><rect x="325" y="8" width="10" height="8" rx="1" fill="#e8eef8" stroke="#5a78b0" stroke-width="1"/><circle cx="325.5" cy="8" r="2.6" fill="#f8d040"/></svg>
<div class="t" style="left:67px;top:637px;font-size:11px;color:#444">Sheet1</div>
<div class="t" style="left:119px;top:637px;font-size:11.2px;letter-spacing:0.5px;font-weight:bold;color:#222">Sheet2</div>
<div class="t" style="left:175px;top:637px;font-size:11px;letter-spacing:0.4px;color:#505050">Sheet2 (2)</div>
<div class="t" style="left:249px;top:637px;font-size:11px;letter-spacing:0.4px;color:#505050">Sheet2 (3)</div>
<div class="a" style="left:680px;top:634px;width:7px;height:13px;background:#fff;border:1px solid #777"></div>
<svg class="a" style="left:688px;top:634px" width="14" height="13"><path d="M10 2 L4 6.5 L10 11z" fill="#222"/></svg>
<div class="a" style="left:713px;top:634px;width:400px;height:13px;background:linear-gradient(#f6f7f9,#e4e6ea);border:1px solid #9ea2aa;border-radius:2px"></div>
<div class="a" style="left:909px;top:637px;width:1px;height:7px;background:#888;box-shadow:2px 0 0 #888,4px 0 0 #888"></div>
<svg class="a" style="left:1112px;top:634px" width="14" height="13"><path d="M4 2 L10 6.5 L4 11z" fill="#222"/></svg>
<div class="a" style="left:1127px;top:634px;width:6px;height:13px;background:#fff;border:1px solid #777"></div>
<div class="a" style="left:0;top:648px;width:1152px;height:21px;background:linear-gradient(#e2e5ea,#eef0f3 30%,#dcdfe4 65%,#c8cbd0)"></div>
<div class="a" style="left:0;top:647px;width:1152px;height:1px;background:#9a9ea6"></div>
<div class="t" style="left:6px;top:653px;font-size:10.5px;color:#333">Ready</div>
<div class="a" style="left:42px;top:650px;width:1px;height:17px;background:#b8bcc4"></div>
<div class="a" style="left:936px;top:650px;width:1px;height:17px;background:#b8bcc4"></div>
<div class="a" style="left:937px;top:650px;width:18px;height:16px;background:#fbe8a0;border:1px solid #e0b850"></div>
<svg class="a" style="left:938px;top:651px" width="60" height="14"><g fill="none" stroke="#555" stroke-width="1"><rect x="3.5" y="3.5" width="10" height="8"/><path d="M3.5 6.5 h10 M3.5 9.5 h10 M6.5 3.5 v8 M10.5 3.5 v8"/><rect x="20.5" y="3.5" width="10" height="8"/><rect x="22.5" y="5.5" width="6" height="4"/><rect x="37.5" y="3.5" width="10" height="8"/><path d="M40.5 3.5 v6 h4 v-6"/></g></svg>
<div class="t" style="left:997px;top:653px;font-size:10.5px;color:#333">100%</div>
<svg class="a" style="left:1028px;top:649px" width="124" height="18"><circle cx="9" cy="9" r="6.5" fill="#f8f8fa" stroke="#666" stroke-width="1"/><rect x="5.5" y="8.2" width="7" height="1.6" fill="#333"/><line x1="17" y1="9" x2="105" y2="9" stroke="#999" stroke-width="1"/><path d="M56 4 h8 v6 l-4 4 l-4 -4z" fill="#f4f4f6" stroke="#777" stroke-width="1"/><circle cx="113" cy="9" r="6.5" fill="#f8f8fa" stroke="#666" stroke-width="1"/><rect x="109.5" y="8.2" width="7" height="1.6" fill="#333"/><rect x="112.2" y="5.5" width="1.6" height="7" fill="#333"/></svg>
<div class="a" style="left:0;top:669px;width:1152px;height:23px;background:linear-gradient(#fdfdfe 0,#f2f5fb 35%,#ccd8ec 55%,#9cb0d4 68%,#b8c8e4 78%,#d4e0f4 92%,#c4d0e8 100%)"></div>
<div class="a" style="left:0;top:668px;width:1152px;height:1px;background:#a4a8ae"></div>
<div class="a" style="left:4px;top:674px;width:14px;height:14px;background:#000000;"></div>
<div class="a" style="left:26px;top:674px;width:14px;height:14px;background:#ffffff;border:1px solid #666"></div>
<div class="a" style="left:47px;top:674px;width:14px;height:14px;background:#ff0000;"></div>
<div class="a" style="left:69px;top:674px;width:14px;height:14px;background:#00ff00;"></div>
<div class="a" style="left:90px;top:674px;width:14px;height:14px;background:#0000ff;"></div>
<div class="a" style="left:112px;top:674px;width:14px;height:14px;background:#ff00ff;"></div>
<div class="a" style="left:134px;top:674px;width:14px;height:14px;background:#ffff00;"></div>
<div class="a" style="left:155px;top:674px;width:14px;height:14px;background:#800000;"></div>
<div class="a" style="left:177px;top:674px;width:14px;height:14px;background:#0080ff;"></div>
<div class="a" style="left:198px;top:674px;width:14px;height:14px;background:#0a3a8a;"></div>
<div class="a" style="left:220px;top:674px;width:14px;height:14px;background:#8080ff;"></div>
<div class="a" style="left:240px;top:671px;width:1px;height:19px;background:#aab4c8"></div>
<svg class="a" style="left:243px;top:671px" width="66" height="20"><g><rect x="3" y="2" width="13" height="11" fill="#111"/><rect x="5" y="4" width="3" height="7" fill="#e02020"/><rect x="8" y="4" width="3" height="7" fill="#20a020"/><rect x="11" y="4" width="3" height="7" fill="#2040e0"/><path d="M8 13 h3 v2 h3 v2 h-9 v-2 h3z" fill="#111"/><rect x="25" y="2" width="13" height="11" fill="#111"/><path d="M30 13 h3 v2 h3 v2 h-9 v-2 h3z" fill="#111"/><rect x="47" y="2" width="13" height="11" fill="#111"/><rect x="49" y="4" width="9" height="7" fill="#fff"/><path d="M52 13 h3 v2 h3 v2 h-9 v-2 h3z" fill="#111"/></g></svg>
<div class="a" style="left:310px;top:671px;width:1px;height:19px;background:#aab4c8"></div>
<svg class="a" style="left:311px;top:671px" width="70" height="20"><rect x="3" y="10" width="17" height="1" fill="#223"/><rect x="26" y="9" width="17" height="3" fill="#111"/><rect x="49" y="8" width="17" height="6" fill="#000"/></svg>
<div class="a" style="left:381px;top:671px;width:1px;height:19px;background:#aab4c8"></div>
<svg class="a" style="left:382px;top:671px" width="136" height="20"><g stroke="#111" stroke-width="1.2" fill="#f4f0a0"><path d="M3 12 L11 5 L16 8 L8 15z"/><path d="M26 12 L34 5 L39 8 L31 15z"/></g><text x="11" y="17" font-family="Liberation Sans" font-weight="bold" font-size="7" fill="#000">All</text><path d="M50 16 L62 4" stroke="#c83030" stroke-width="2"/><path d="M52 14 L60 6" stroke="#444" stroke-width="1"/><path d="M72 16 L84 4" stroke="#444" stroke-width="2.5"/><path d="M70 17 L74 13" stroke="#8040c0" stroke-width="3"/><path d="M94 15 L106 4" stroke="#60a0e0" stroke-width="4"/><path d="M93 16 L97 12" stroke="#e040e0" stroke-width="4"/><rect x="112" y="1" width="20" height="18" fill="#f4f6fa" stroke="#c4ccd8"/><path d="M118 4 v11 l3 -3 l2 4 l2 -1 l-2 -4 h4z" fill="#fff" stroke="#000" stroke-width="1"/></svg>
<div class="a" style="left:516px;top:671px;width:1px;height:19px;background:#aab4c8"></div>
<svg class="a" style="left:517px;top:671px" width="190" height="20"><path d="M11 3 L4 10 h4 v7 h6 v-7 h4z" fill="#909498"/><path d="M33 17 L26 10 h4 v-7 h6 v7 h4z" fill="#909498"/><rect x="46" y="1" width="1" height="18" fill="#b0b8c8"/><rect x="51" y="5.5" width="15" height="9" fill="#f4f0e0" stroke="#222" stroke-width="1.2"/><path d="M54 10 h9 M56 12 h5" stroke="#333" stroke-width="1"/><rect x="74" y="3" width="14" height="14" fill="#222"/><rect x="76.5" y="4" width="9" height="5" fill="#e8e8d0"/><rect x="77" y="12" width="7" height="4" fill="#667"/><rect x="94" y="1" width="1" height="18" fill="#b0b8c8"/><circle cx="107" cy="10.5" r="5" fill="#d81010"/><circle cx="105.5" cy="9" r="1.5" fill="#ff8080"/><path d="M126 5 L138 10.5 L126 16z" fill="#102090"/><rect x="143" y="1" width="1" height="18" fill="#b0b8c8"/><path d="M149 4 h13 v7 h-4 l-2.5 4 l-2.5 -4 h-4z" fill="#f0f0f0" stroke="#777" stroke-width="1.2"/><path d="M151 14 l-2 4 M159 14 l2 4" stroke="#777" stroke-width="1"/><rect x="191" y="1" width="1" height="18" fill="#b0b8c8"/><rect x="172" y="3" width="10" height="14" fill="#fff" stroke="#c02020" stroke-width="1.6"/><path d="M175 16 l2.5 -4 l3 4 M177.5 12 v-4 l2 2" fill="none" stroke="#333" stroke-width="1.2"/></svg>
<div class="a" style="left:0;top:691px;width:1152px;height:1px;background:#3e4660"></div>
<div class="a" style="left:0;top:692px;width:1152px;height:28px;background:linear-gradient(#4a5068 0px,#4a5068 1px,#a89292 2px,#806a6a 4px,#6a5454 9px,#5a4242 13px,#1a0808 14px,#140404 28px)"></div>
<div class="a" style="left:8px;top:692px;width:39px;height:38px;border-radius:50%;background:radial-gradient(circle at 50% 75%,#40c0f0 0,#2a80c0 35%,#1a4a80 65%,#0a2848 90%);border:2px solid #0a0e14;box-shadow:inset 0 2px 3px #a0c8e8"></div>
<svg class="a" style="left:14px;top:694px" width="26" height="24"><path d="M5 2 Q9 0 14 2.5 L12.5 9.5 Q8 7.5 3.5 9z" fill="#e8601c"/><path d="M15 3 Q19 5.5 24.5 3.5 L23 10.5 Q18 12.5 13.5 10z" fill="#78c030"/><path d="M3 10.5 Q8 9 12.5 11 L11 18 Q6.5 16 1.5 17.5z" fill="#2ea0e8"/><path d="M13 11.5 Q18 14 23 11.5 L21.5 19 Q16.5 21 11.5 18.5z" fill="#f8c828"/></svg>
<svg class="a" style="left:58px;top:697px" width="104" height="20"><rect x="4" y="4.5" width="11" height="9" fill="#2a50d8" stroke="#c8d0e8" stroke-width="1"/><path d="M5 12 L10 5 L14 12z" fill="#4080f0"/><rect x="7" y="14" width="6" height="2" fill="#aaa"/><rect x="2" y="9" width="1.2" height="7" fill="#888"/><ellipse cx="29.5" cy="10" rx="5.5" ry="4.8" fill="none" stroke="#2a8ad8" stroke-width="2.6"/><rect x="25" y="9" width="9" height="1.6" fill="#2a8ad8"/><path d="M23 15 Q26 2 36 3.5" fill="none" stroke="#e8c050" stroke-width="1.4"/><rect x="42.5" y="4.5" width="14" height="11" fill="#3a78d0" stroke="#e0e8f0" stroke-width="1.2"/><rect x="44" y="13" width="11" height="1.5" fill="#1a3060"/><rect x="62.5" y="4.5" width="14" height="11" fill="#1a3a90" stroke="#dde" stroke-width="1"/><rect x="65" y="7" width="5" height="4" fill="#dde"/><rect x="68" y="9" width="6" height="4" fill="#ccd"/><rect x="83" y="3" width="15" height="14" fill="#f4d060" stroke="#c8a850"/><ellipse cx="90.5" cy="10" rx="3.2" ry="4.2" fill="none" stroke="#c07010" stroke-width="2"/></svg>
<div class="a" style="left:185px;top:695px;width:142px;height:24px;border-radius:3px;background:linear-gradient(#2a1c1c,#1a0e0e 50%,#100606);border:1px solid #6a5c5c"></div>
<svg class="a" style="left:193px;top:699px" width="15" height="16"><rect x="0.5" y="0.5" width="13" height="14" fill="#e4f4dc" stroke="#a8c898"/><path d="M3 3 L10.5 12.5 M10.5 3 L3 12.5" stroke="#1e8a30" stroke-width="3"/><path d="M3 3 L10.5 12.5" stroke="#40b040" stroke-width="1.5"/></svg>
<div class="t" style="left:212px;top:701px;font-size:10.6px;color:#fff">Microsoft Excel - car...</div>
<div class="a" style="left:329px;top:695px;width:142px;height:24px;border-radius:3px;background:linear-gradient(#5e4c4c,#4a3838 45%,#201010 55%,#140808);border:1px solid #6a5a5a"></div>
<svg class="a" style="left:335px;top:698px" width="18" height="18"><path d="M2 6 Q9 2 16 7 Q15 14 9 15 Q3 13 2 6z" fill="#e03030"/><path d="M5 9 Q10 6 14 9 Q12 13 8 13z" fill="#f0c020"/><path d="M3 3 L8 8" stroke="#444" stroke-width="1.5"/></svg>
<div class="t" style="left:355px;top:701px;font-size:10.2px;color:#fff">Power Presenter RE</div>
<svg class="a" style="left:920px;top:692px" width="232" height="28"><path d="M10 11 L5.5 14.5 L10 18" fill="none" stroke="#fff" stroke-width="2"/><rect x="19" y="5.5" width="10" height="13.5" fill="#b4dc3c" stroke="#3a4a10" stroke-width="1"/><g fill="#7aa020"><rect x="20" y="8" width="8" height="1"/><rect x="20" y="11" width="8" height="1"/><rect x="20" y="14" width="8" height="1"/><rect x="20" y="17" width="8" height="1"/></g><rect x="33.5" y="7.5" width="11" height="11" fill="#2a2e30" stroke="#8a9090" stroke-width="1.5"/><path d="M37 16 L46 6" stroke="#c8c8c8" stroke-width="1.5"/><rect x="44" y="12" width="2" height="7" fill="#8a9090"/><path d="M56.5 5 L62 6.8 V12 Q61.5 17 56.5 20 Q51.5 17 51 12 V6.8z" fill="#b02028" stroke="#f0d0d0" stroke-width="1.2"/><path d="M54 9.5 L59 15 M59 9.5 L54 15" stroke="#fff" stroke-width="1.5"/><circle cx="72.3" cy="12.5" r="6.3" fill="none" stroke="#60d040" stroke-width="3"/><path d="M66 10 L69 6 L71 11z M78.5 15 L75.5 19 L73.5 14z" fill="#a0f060"/><circle cx="72.3" cy="12.5" r="2.5" fill="#1a2a10"/><rect x="82.5" y="5.5" width="13" height="13" fill="#1e50b0" stroke="#90b8f0" stroke-width="1"/><rect x="84" y="17" width="12" height="2" fill="#4080e0"/><g fill="#80b0f0"><rect x="87" y="9" width="1.2" height="5"/><rect x="90" y="9" width="1.2" height="5"/></g><rect x="99.5" y="5.5" width="12" height="9" fill="#6a6a6a" stroke="#a8a8a8" stroke-width="1.2"/><rect x="100" y="16" width="2.5" height="3" fill="#ccc"/><rect x="108" y="16" width="2.5" height="3" fill="#ccc"/><path d="M125 7 V11 M128 7 V11" stroke="#eee" stroke-width="1.2"/><path d="M124 11 H129.5 V14 L127.5 16 V19.5 H126 V16 L124 14z" fill="#f0f0f0"/><rect x="130.5" y="5.5" width="6" height="13.5" rx="1" fill="#a8d8a8" stroke="#f0f0f0" stroke-width="1"/><rect x="146" y="5" width="7" height="7" fill="#1e50b0" stroke="#d0e0f0" stroke-width="1"/><rect x="141" y="9" width="8" height="7" fill="#1e50b0" stroke="#d0e0f0" stroke-width="1"/><rect x="143" y="17" width="5" height="1.5" fill="#ddd"/><circle cx="150" cy="16" r="3.6" fill="#30b0c0"/><path d="M156.5 10.5 H159 L163 6.5 V19.5 L159 15.5 H156.5z" fill="#e0e0e0"/><path d="M165 10 Q166.5 13 165 16 M167.5 8 Q170 13 167.5 18" fill="none" stroke="#d0d0d0" stroke-width="1.1"/></svg>
<div class="t" style="left:1096px;top:702px;font-size:10.4px;color:#fff">12:25 PM</div>
<svg class="a" style="left:198px;top:640px" width="16" height="22"><path d="M1.2 0.8 L1.2 16.5 L4.8 13.2 L7.6 19.6 L10.4 18.4 L7.6 12.2 L12.4 12.2z" fill="#fff" stroke="#000" stroke-width="1.1" stroke-linejoin="round"/></svg>
</body></html>
